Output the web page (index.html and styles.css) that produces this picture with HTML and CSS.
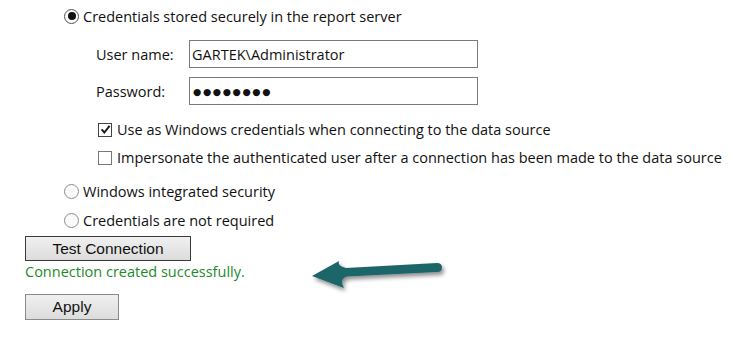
FILE: index.html
```html
<!DOCTYPE html>
<html>
<head>
<meta charset="utf-8">
<link rel="stylesheet" href="styles.css">
</head>
<body>
<div class="page">
  <div class="option first"><span class="radio on"></span><span class="lbl">Credentials stored securely in the report server</span></div>
  <div class="creds">
    <div class="field"><span class="flabel">User name:</span><div class="input">GARTEK\Administrator</div></div>
    <div class="field"><span class="flabel">Password:</span><div class="input pw">●●●●●●●●</div></div>
    <div class="check c1"><span class="box on"><svg width="11" height="11" viewBox="0 0 11 11"><path d="M1.6 5.4 L4.3 8.5 L9.6 1.8" fill="none" stroke="#1a1a1a" stroke-width="2"/></svg></span><span class="lbl">Use as Windows credentials when connecting to the data source</span></div>
    <div class="check c2"><span class="box"></span><span class="lbl">Impersonate the authenticated user after a connection has been made to the data source</span></div>
  </div>
  <div class="option o2"><span class="radio"></span><span class="lbl">Windows integrated security</span></div>
  <div class="option o3"><span class="radio"></span><span class="lbl">Credentials are not required</span></div>
  <button class="btn test">Test Connection</button>
  <div class="msg">Connection created successfully.</div>
  <button class="btn apply">Apply</button>
  <svg class="arrow" width="160" height="50" viewBox="300 250 160 50">
    <defs>
      <filter id="sh" x="-20%" y="-50%" width="140%" height="200%">
        <feGaussianBlur in="SourceAlpha" stdDeviation="2"/>
        <feOffset dx="2" dy="3" result="b"/>
        <feComponentTransfer><feFuncA type="linear" slope="0.45"/></feComponentTransfer>
        <feMerge><feMergeNode/><feMergeNode in="SourceGraphic"/></feMerge>
      </filter>
    </defs>
    <path filter="url(#sh)" fill="#1f6567" d="M312,276 L339,261 Q337,266 346,268 L437,263 Q442,263 442,267.5 Q442,272 437,272 L347,276.5 Q339,279 344,288 Z"/>
  </svg>
</div>
</body>
</html>
```
FILE: styles.css
```css
* { box-sizing: border-box; }
html, body { margin: 0; padding: 0; background: #fff; }
.page {
  position: relative;
  width: 734px;
  height: 354px;
  padding: 4px 0 0 25px;
  display: flex;
  flex-direction: column;
  align-items: flex-start;
  font-family: "Open Sans", sans-serif;
  font-size: 14.5px;
  color: #111;
}
.option {
  display: flex;
  align-items: center;
  height: 24px;
  margin-left: 39px;
}
.option .lbl { margin-left: 4px; }
.o2 { margin-top: 10px; }
.o3 { margin-top: 5px; }
.radio {
  width: 15px;
  height: 15px;
  border-radius: 50%;
  border: 1px solid #8c8c8c;
  background: #fbfbfb;
  display: flex;
  align-items: center;
  justify-content: center;
}
.radio.on { border-color: #555; }
.radio.on::after {
  content: "";
  width: 8px;
  height: 8px;
  border-radius: 50%;
  background: #111;
}
.creds {
  margin-left: 71px;
  margin-top: 12px;
  display: flex;
  flex-direction: column;
}
.field {
  display: flex;
  align-items: center;
  height: 28px;
  margin-bottom: 9px;
}
.flabel { width: 93px; }
.input {
  width: 289px;
  height: 28px;
  border: 1.5px solid #7a7a7a;
  display: flex;
  align-items: center;
  padding-left: 2px;
}
.pw {
  font-family: "DejaVu Sans", sans-serif;
  font-size: 9.5px;
  letter-spacing: 1.6px;
  padding-left: 3px;
}
.check {
  display: flex;
  align-items: center;
  height: 24px;
  margin-left: 2px;
}
.c1 { margin-top: 3.5px; }
.c2 { margin-top: 4px; }
.check .lbl { margin-left: 5px; }
.box {
  width: 14px;
  height: 14px;
  border: 1px solid #777;
  background: #fff;
  display: flex;
  align-items: center;
  justify-content: center;
}
.box.on { border-color: #444; }
.btn {
  font-family: "Liberation Sans", Arial, sans-serif;
  font-size: 15.5px;
  color: #111;
  background: linear-gradient(#f0f0f0, #dcdcdc);
  padding: 0;
  margin: 0;
}
.test {
  margin-top: 3.5px;
  width: 166px;
  height: 25px;
  border: 1.5px solid #3a3a3a;
}
.msg {
  color: #1d8a2a;
  height: 20px;
  line-height: 20px;
  margin-top: 1px;
}
.apply {
  margin-top: 12px;
  width: 94px;
  height: 26px;
  border: 1px solid #8a8a8a;
}
.arrow {
  position: absolute;
  left: 300px;
  top: 250px;
}
```
